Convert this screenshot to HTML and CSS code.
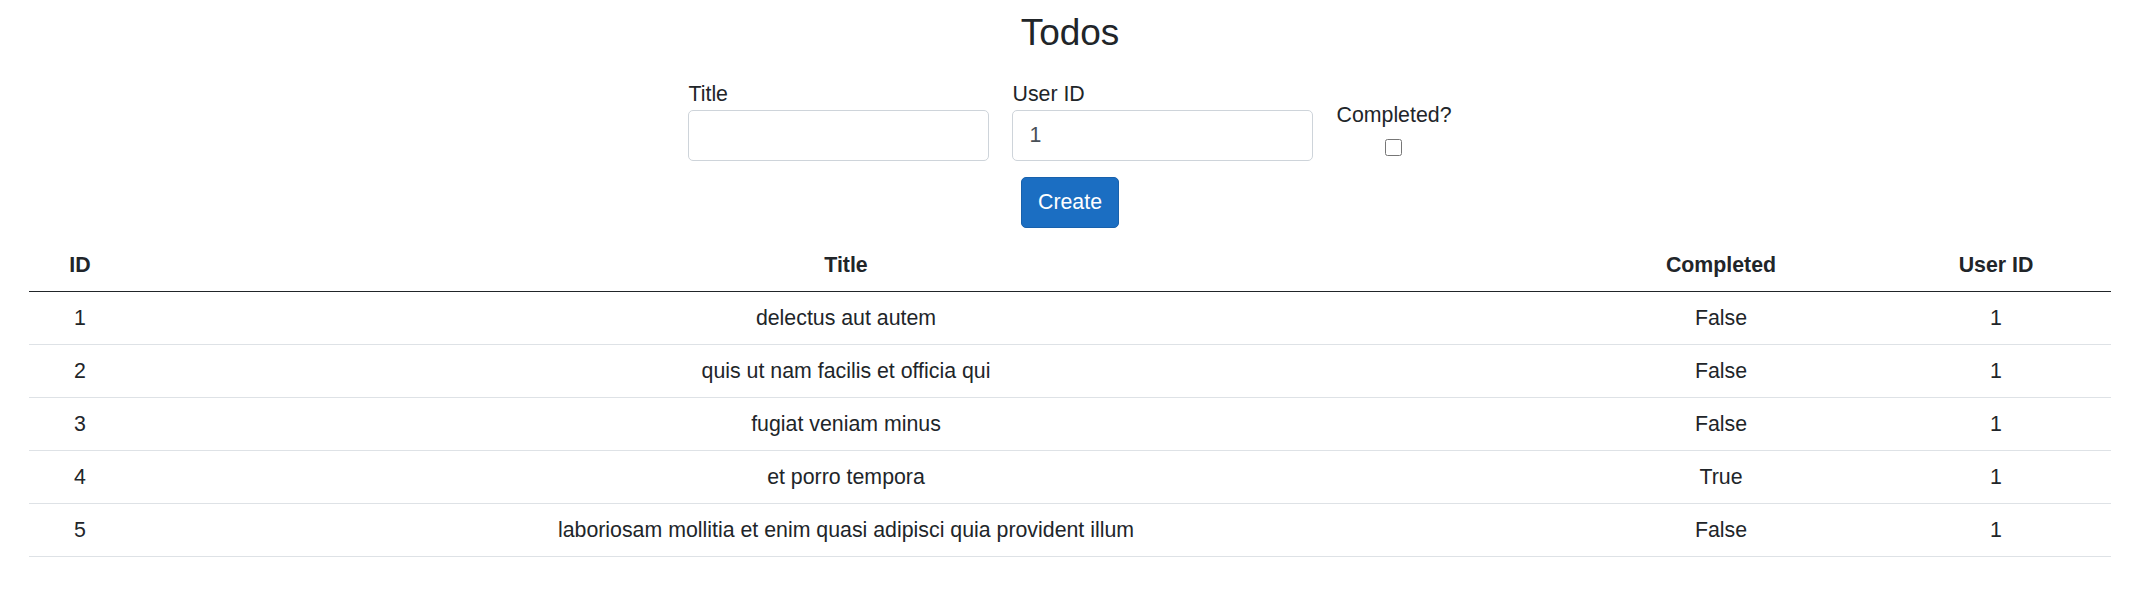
FILE: index.html
```html
<!DOCTYPE html>
<html lang="en">

<head>
    <meta charset="UTF-8">
    <meta name="viewport" content="width=device-width, initial-scale=1.0">
    <title>Todos</title>
    <link rel="stylesheet" href="styles.css">
</head>
<body>
    <div class="page">
        <h1 class="page-title">Todos</h1>

        <form class="todo-form">
            <div class="form-row">
                <div class="field">
                    <label for="title">Title</label>
                    <input type="text" id="title" class="form-control">
                </div>
                <div class="field">
                    <label for="userId">User ID</label>
                    <input type="number" id="userId" class="form-control" value="1">
                </div>
                <div class="field field-check">
                    <label for="completed">Completed?</label>
                    <input type="checkbox" id="completed" class="check">
                </div>
            </div>
            <button type="button" class="btn-primary">Create</button>
        </form>

        <table class="todo-table">
            <colgroup>
                <col class="col-id">
                <col class="col-title">
                <col class="col-completed">
                <col class="col-user">
            </colgroup>
            <thead>
                <tr>
                    <th>ID</th>
                    <th>Title</th>
                    <th>Completed</th>
                    <th>User ID</th>
                </tr>
            </thead>
            <tbody>
                <tr>
                    <td>1</td>
                    <td>delectus aut autem</td>
                    <td>False</td>
                    <td>1</td>
                </tr>
                <tr>
                    <td>2</td>
                    <td>quis ut nam facilis et officia qui</td>
                    <td>False</td>
                    <td>1</td>
                </tr>
                <tr>
                    <td>3</td>
                    <td>fugiat veniam minus</td>
                    <td>False</td>
                    <td>1</td>
                </tr>
                <tr>
                    <td>4</td>
                    <td>et porro tempora</td>
                    <td>True</td>
                    <td>1</td>
                </tr>
                <tr>
                    <td>5</td>
                    <td>laboriosam mollitia et enim quasi adipisci quia provident illum</td>
                    <td>False</td>
                    <td>1</td>
                </tr>
            </tbody>
        </table>
    </div>
</body>
</html>
```

FILE: styles.css
```css
body {
    font-family: "Liberation Sans", Arial, sans-serif;
    font-size: 21.33px;
    line-height: 32px;
    color: #212529;
    margin: 0;
    padding: 0;
    background-color: white;
}

.page {
    padding: 11px 22px 0 29px;
}

.page-title {
    font-size: 37px;
    font-weight: normal;
    line-height: 44px;
    text-align: center;
    margin: 0 0 23px;
}

.form-row {
    display: flex;
    justify-content: center;
    align-items: flex-start;
    gap: 23px;
}

.field {
    width: 301px;
}

.field label {
    display: block;
}

.form-control {
    display: block;
    width: 100%;
    height: 51px;
    box-sizing: border-box;
    padding: 0 16px;
    font-family: inherit;
    font-size: 21.33px;
    color: #495057;
    background-color: white;
    border: 1px solid #ced4da;
    border-radius: 5px;
    -moz-appearance: textfield;
}

.form-control::-webkit-inner-spin-button,
.form-control::-webkit-outer-spin-button {
    -webkit-appearance: none;
    margin: 0;
}

.field-check {
    width: auto;
    margin-top: 21px;
    text-align: center;
}

.check {
    display: block;
    width: 17px;
    height: 17px;
    margin: 8px auto 0;
}

.btn-primary {
    display: block;
    height: 51px;
    margin: 16px auto 0;
    padding: 0 16px;
    font-family: inherit;
    font-size: 21.33px;
    color: white;
    background-color: #1b6ec2;
    border: 1px solid #1861ac;
    border-radius: 5px;
    cursor: pointer;
}

.todo-table {
    width: 100%;
    margin-top: 11px;
    border-collapse: collapse;
    table-layout: fixed;
}

.col-id {
    width: 102px;
}

.col-completed {
    width: 320px;
}

.col-user {
    width: 230px;
}

.todo-table th,
.todo-table td {
    padding: 10px;
    text-align: center;
    line-height: 32px;
}

.todo-table th {
    font-weight: bold;
    border-bottom: 1px solid #212529;
}

.todo-table td {
    border-bottom: 1px solid #dee2e6;
}
```
